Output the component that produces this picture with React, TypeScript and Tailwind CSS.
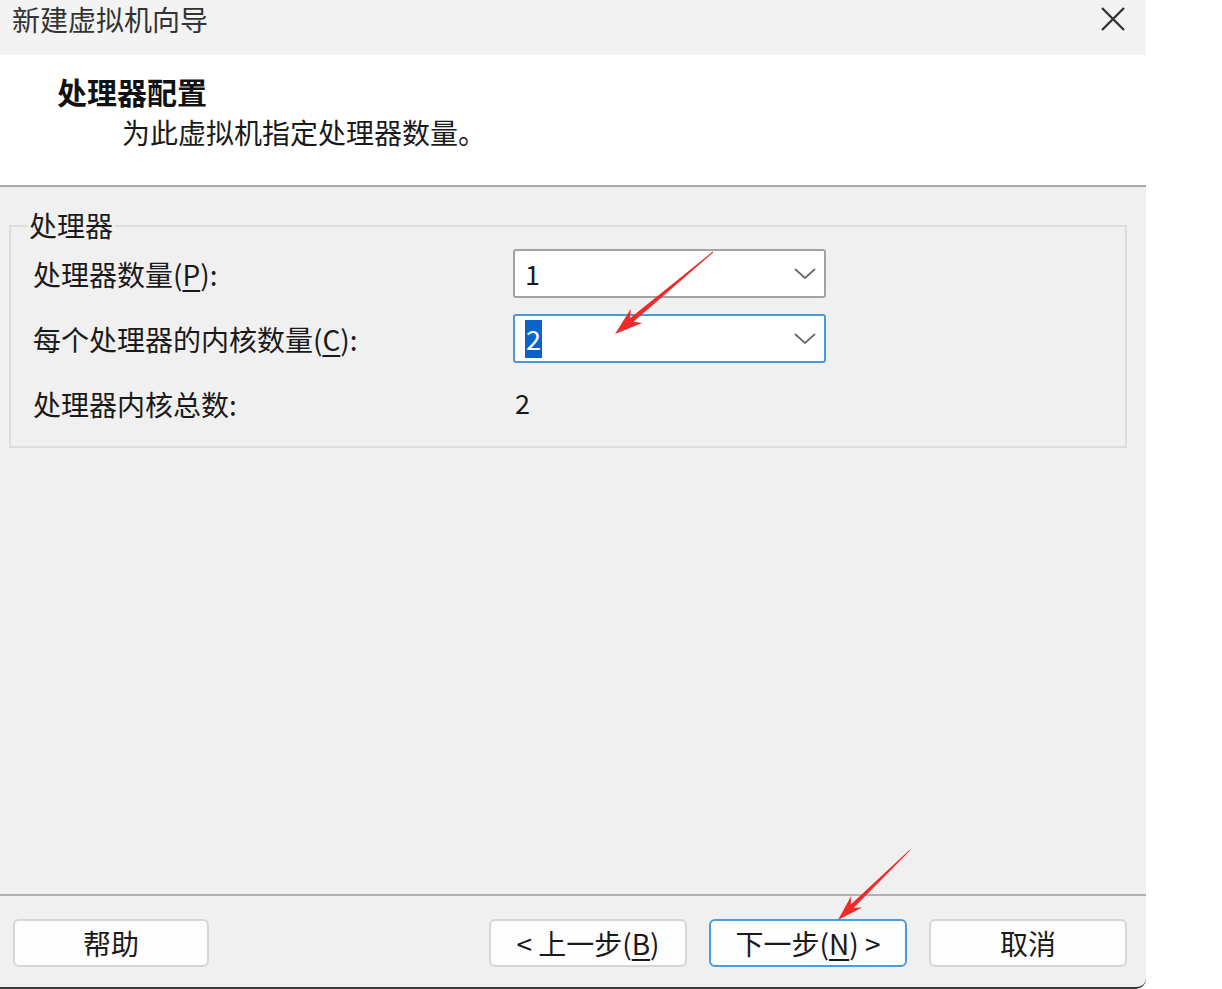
import React from "react";

const font = { fontFamily: '"Noto Sans CJK SC", "Noto Sans", sans-serif' };

function Chevron() {
  return (
    <svg width="22" height="12" viewBox="0 0 22 12" fill="none">
      <path d="M1 1l10 9 10-9" stroke="#6b6b6b" strokeWidth="1.8" />
    </svg>
  );
}

function Combo({ value, focused }: { value: string; focused?: boolean }) {
  return (
    <div
      className={
        "flex h-[49px] w-[313px] items-center justify-between rounded-[3px] border-2 bg-white pl-[10px] pr-[8px] " +
        (focused ? "border-[#4a98dc]" : "border-[#a3a3a3]")
      }
    >
      {focused ? (
        <span className="bg-[#0a63c9] px-[1px] text-[27px] leading-[38px] text-white">{value}</span>
      ) : (
        <span className="text-[27px] leading-[38px] text-[#1a1a1a]">{value}</span>
      )}
      <Chevron />
    </div>
  );
}

function Btn({ children, primary }: { children: React.ReactNode; primary?: boolean }) {
  return (
    <button
      className={
        "flex h-[48px] w-[198px] items-center justify-center rounded-[6px] border-2 bg-[#fdfdfd] text-[28px] text-[#1a1a1a] " +
        (primary ? "border-[#4a9be0]" : "border-[#d6d6d6]")
      }
    >
      {children}
    </button>
  );
}

export default function App() {
  return (
    <div className="relative flex h-[989px] w-[1222px] bg-white" style={font}>
      <div className="flex h-[989px] w-[1146px] flex-col overflow-hidden rounded-br-[10px] border-b-2 border-[#3a3a3a] bg-[#f0f0f0]">
        {/* title bar */}
        <div className="flex h-[55px] shrink-0 items-start justify-between bg-[#f3f3f3] pl-[12px] pr-[20px] pt-[4px]">
          <span className="text-[28px] leading-[30px] text-[#333]">新建虚拟机向导</span>
          <svg width="26" height="26" viewBox="0 0 26 26" className="mt-[2px]">
            <path d="M2 2l22 22M24 2L2 24" stroke="#333" strokeWidth="2.4" />
          </svg>
        </div>

        {/* header */}
        <div className="h-[132px] shrink-0 border-b-2 border-[#a9a9a9] bg-white pl-[57px] pt-[18px]">
          <div className="text-[30px] font-bold leading-[36px] text-[#111]">处理器配置</div>
          <div className="ml-[65px] mt-[5px] text-[28px] leading-[36px] text-[#1a1a1a]">
            为此虚拟机指定处理器数量。
          </div>
        </div>

        {/* body */}
        <div className="flex-1 pt-[38px]">
          <div className="relative mx-[9px] w-[1118px] border-2 border-[#dedede] pb-[18px] pl-[22px] pt-[22px]">
            <span className="absolute -top-[20px] left-[16px] bg-[#f0f0f0] px-[2px] text-[28px] leading-[36px] text-[#1a1a1a]">
              处理器
            </span>
            <div className="flex flex-col gap-[16px] text-[28px] text-[#1a1a1a]">
              <div className="flex h-[49px] items-center">
                <span className="w-[480px]">
                  处理器数量(<span className="underline underline-offset-[4px]">P</span>):
                </span>
                <Combo value="1" />
              </div>
              <div className="flex h-[49px] items-center">
                <span className="w-[480px]">
                  每个处理器的内核数量(<span className="underline underline-offset-[4px]">C</span>):
                </span>
                <Combo value="2" focused />
              </div>
              <div className="flex h-[49px] items-center">
                <span className="w-[480px]">处理器内核总数:</span>
                <span className="pl-[2px] text-[27px]">2</span>
              </div>
            </div>
          </div>
        </div>

        {/* footer */}
        <div className="flex h-[93px] shrink-0 items-start border-t-2 border-[#b0b0b0] pl-[13px] pr-[19px] pt-[23px]">
          <button className="flex h-[48px] w-[196px] items-center justify-center rounded-[6px] border-2 border-[#d6d6d6] bg-[#fdfdfd] text-[28px] text-[#1a1a1a]">
            帮助
          </button>
          <div className="ml-auto flex gap-[22px]">
            <Btn>
              &lt; 上一步(<span className="underline underline-offset-[4px]">B</span>)
            </Btn>
            <Btn primary>
              下一步(<span className="underline underline-offset-[4px]">N</span>) &gt;
            </Btn>
            <Btn>取消</Btn>
          </div>
        </div>
      </div>

      {/* annotation arrows */}
      <svg className="pointer-events-none absolute left-0 top-0" width="1222" height="989">
        <polygon
          fill="#ee2b2b"
          points="713.3,252.4 633.5,321.8 642.3,322.9 615,334 630.7,309.1 630.3,318.0 712.7,251.6"
        />
        <polygon
          fill="#ee2b2b"
          points="910.3,850.3 853.8,907.7 862.2,907.6 838,920 851.0,896.2 850.8,904.5 909.7,849.7"
        />
      </svg>
    </div>
  );
}
